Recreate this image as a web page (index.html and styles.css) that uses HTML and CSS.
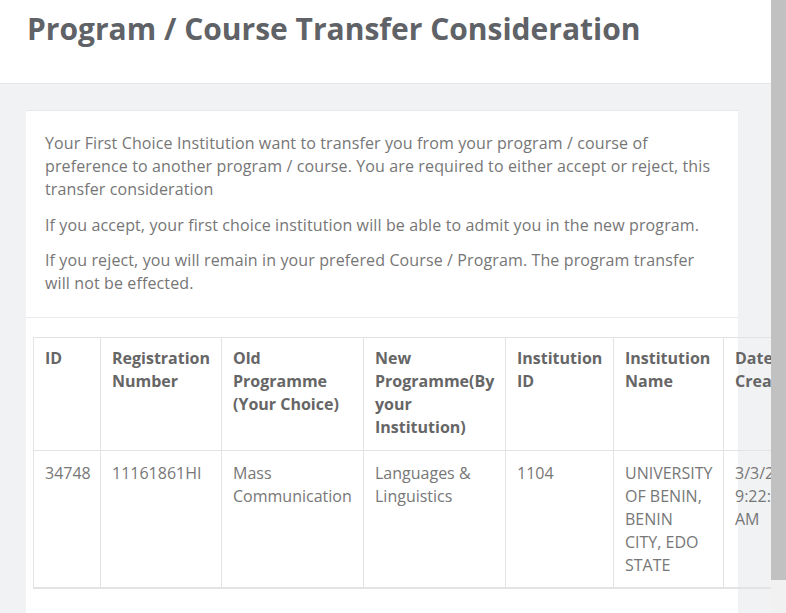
FILE: index.html
```html
<!DOCTYPE html>
<html lang="en">
<head>
<meta charset="utf-8">
<title>Program / Course Transfer Consideration</title>
<link rel="stylesheet" href="styles.css">
</head>
<body>
<div class="page">
  <div class="main">
    <header class="page-header">
      <h1 class="page-title">Program / Course Transfer Consideration</h1>
    </header>
    <div class="content">
      <section class="card">
        <div class="card-body">
          <p>Your First Choice Institution want to transfer you from your program / course of preference to another program / course. You are required to either accept or reject, this transfer consideration</p>
          <p>If you accept, your first choice institution will be able to admit you in the new program.</p>
          <p>If you reject, you will remain in your prefered Course / Program. The program transfer will not be effected.</p>
        </div>
        <div class="card-table">
          <table class="data-table">
            <colgroup>
              <col class="c-id">
              <col class="c-reg">
              <col class="c-old">
              <col class="c-new">
              <col class="c-iid">
              <col class="c-iname">
              <col class="c-date">
              <col class="c-status">
            </colgroup>
            <thead>
              <tr>
                <th>ID</th>
                <th>Registration Number</th>
                <th>Old Programme (Your Choice)</th>
                <th>New Programme(By your Institution)</th>
                <th>Institution ID</th>
                <th>Institution Name</th>
                <th>Date Created</th>
                <th>Action</th>
              </tr>
            </thead>
            <tbody>
              <tr>
                <td>34748</td>
                <td>11161861HI</td>
                <td>Mass Communication</td>
                <td>Languages &amp; Linguistics</td>
                <td>1104</td>
                <td>UNIVERSITY OF BENIN, BENIN CITY, EDO STATE</td>
                <td>3/3/2021 9:22:14 AM</td>
                <td>Accept</td>
              </tr>
            </tbody>
          </table>
        </div>
      </section>
    </div>
  </div>
  <div class="scrollbar"><div class="scroll-thumb"></div></div>
</div>
</body>
</html>
```

FILE: styles.css
```css
html, body {
  margin: 0;
  padding: 0;
}
body {
  font-family: "Open Sans", "Liberation Sans", sans-serif;
  font-size: 16px;
  line-height: 1.42857;
  color: #767676;
  background: #f1f2f4;
}
.page {
  display: flex;
  height: 613px;
  overflow: hidden;
}
.main {
  flex: 1;
  min-width: 0;
  overflow: hidden;
  background: #f1f2f4;
}
.page-header {
  height: 84px;
  background: #ffffff;
  border-bottom: 1px solid #e4e6e9;
  box-sizing: border-box;
  padding: 9px 27px 0;
}
.page-title {
  margin: 0;
  font-size: 30px;
  line-height: 40px;
  font-weight: 700;
  color: #5f6266;
  white-space: nowrap;
}
.content {
  padding: 26px 33px 0 26px;
}
.card {
  background: #ffffff;
  border-top: 1px solid #e6e8eb;
  height: 560px;
}
.card-body {
  padding: 21px 19px 22px;
  border-bottom: 1px solid #e8e9ec;
}
.card-body p {
  margin: 0 0 13px;
  letter-spacing: 0.12px;
}
.card-body p:last-child {
  margin-bottom: 0;
}
.card-table {
  padding: 19px 0 0 7px;
}
.data-table {
  border-collapse: collapse;
  table-layout: fixed;
  width: 900px;
}
.c-id { width: 67px; }
.c-reg { width: 121px; }
.c-old { width: 142px; }
.c-new { width: 142px; }
.c-iid { width: 108px; }
.c-iname { width: 110px; }
.c-date { width: 100px; }
.c-status { width: 110px; }
.data-table th,
.data-table td {
  border: 1px solid #e3e3e3;
  padding: 11px 11px 10px;
  text-align: left;
  vertical-align: top;
}
.data-table th {
  padding: 9px 11px 12px;
  font-weight: 700;
  color: #666666;
}
.data-table td {
  color: #777777;
}
.data-table tbody tr:last-child td {
  border-bottom: 2px solid #e3e3e3;
}
.scrollbar {
  width: 15px;
  flex: none;
  background: #f1f1f1;
}
.scroll-thumb {
  height: 580px;
  background: #c1c1c1;
}
```
